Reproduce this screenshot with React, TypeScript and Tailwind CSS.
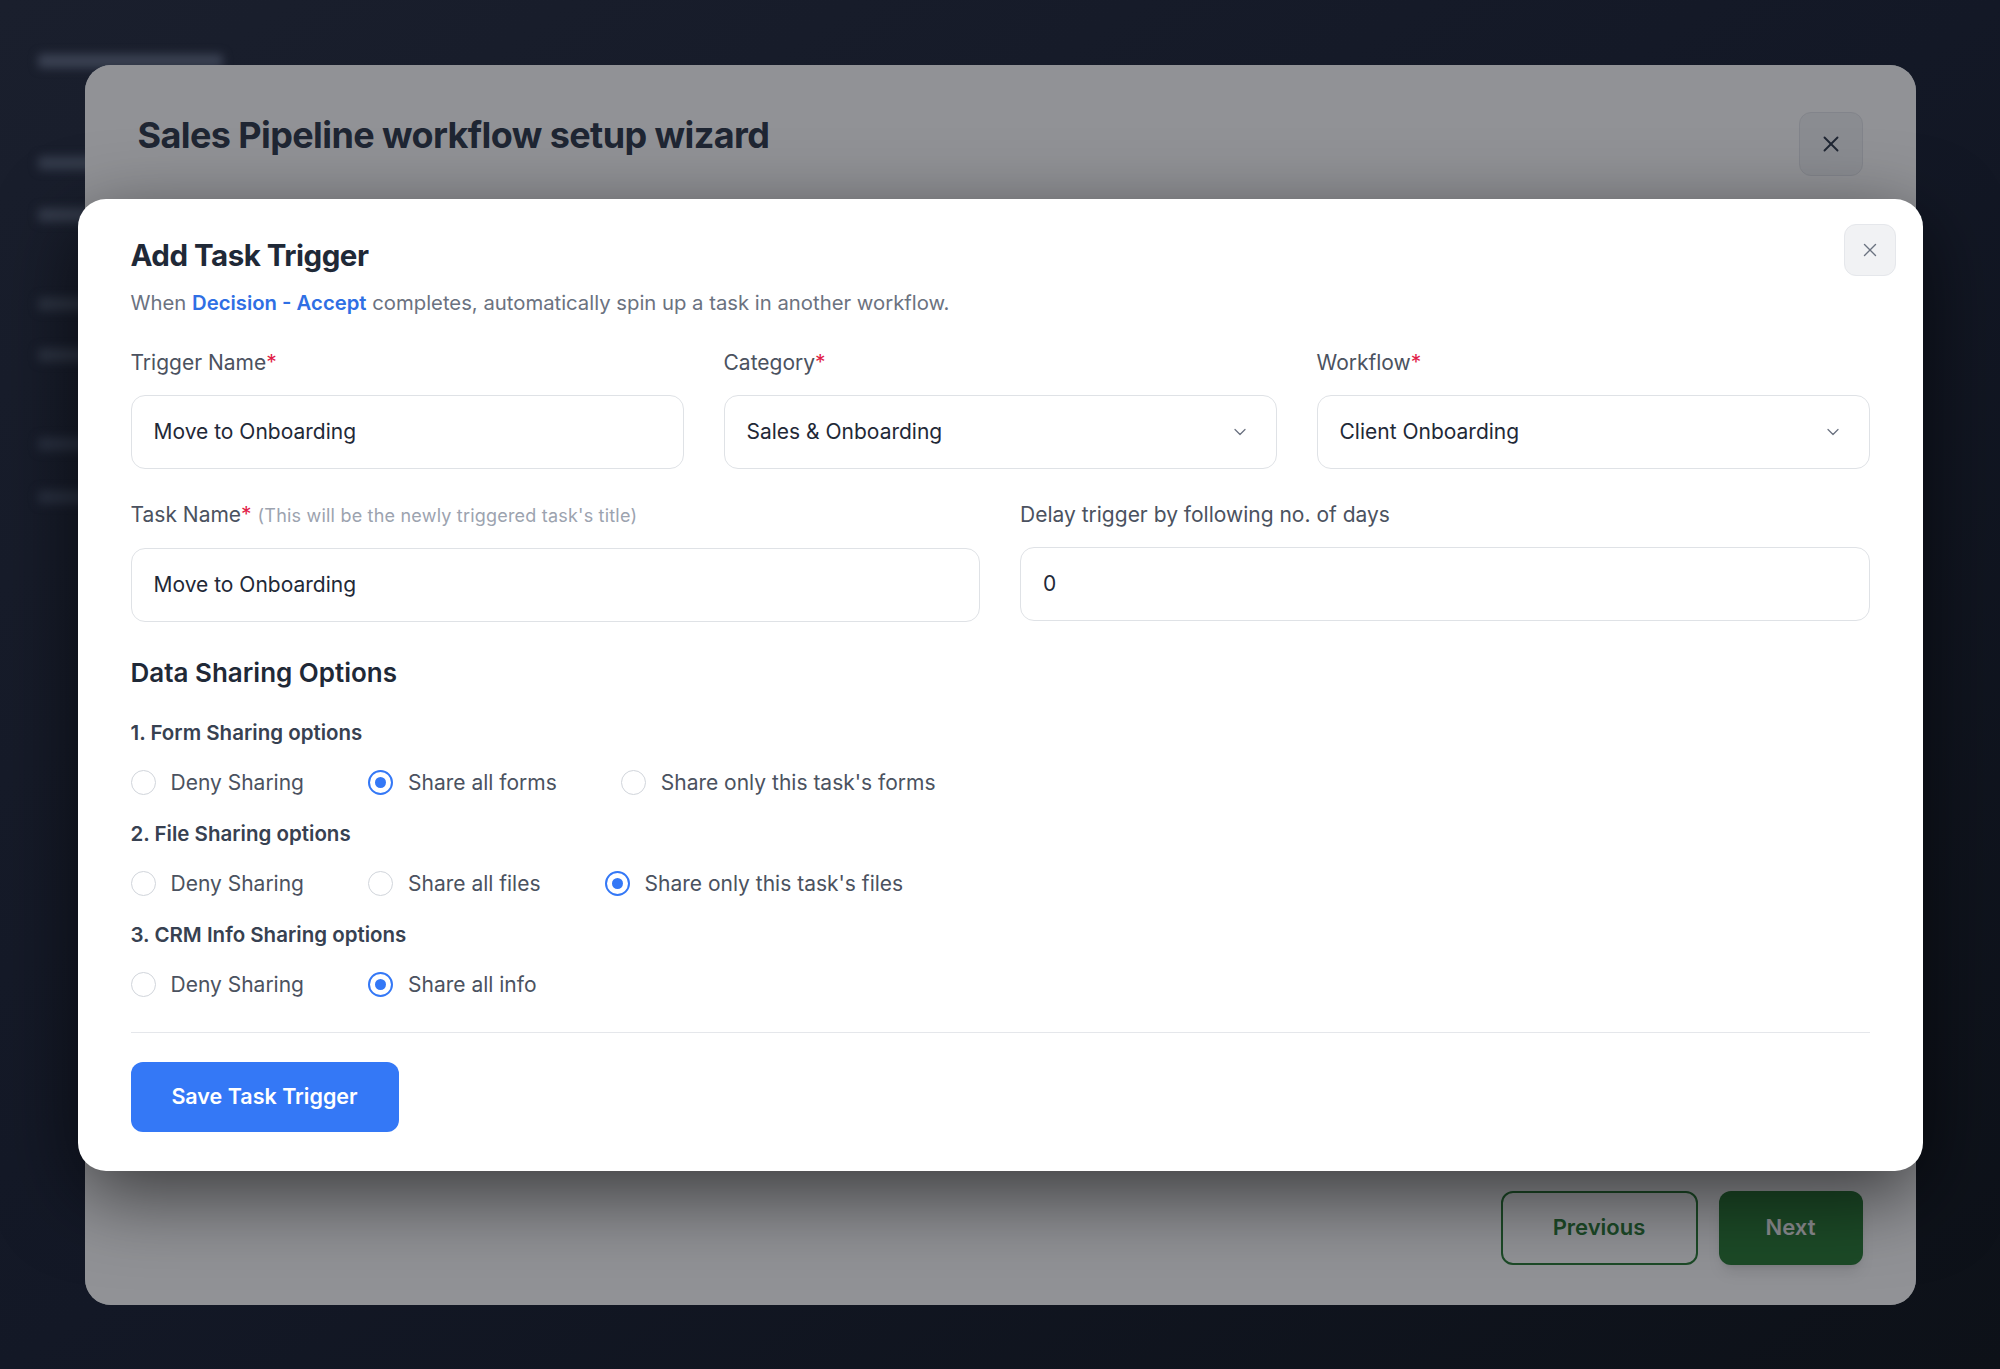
import { ChevronDown, X } from "lucide-react";

type Opt = { label: string; checked?: boolean };

const sharingGroups: { title: string; options: Opt[] }[] = [
  {
    title: "1. Form Sharing options",
    options: [{ label: "Deny Sharing" }, { label: "Share all forms", checked: true }, { label: "Share only this task's forms" }],
  },
  {
    title: "2. File Sharing options",
    options: [{ label: "Deny Sharing" }, { label: "Share all files" }, { label: "Share only this task's files", checked: true }],
  },
  {
    title: "3. CRM Info Sharing options",
    options: [{ label: "Deny Sharing" }, { label: "Share all info", checked: true }],
  },
];

const Radio = ({ checked }: { checked?: boolean }) =>
  checked ? (
    <span className="flex h-[25px] w-[25px] items-center justify-center rounded-full border-2 border-[#3478f6] bg-white">
      <span className="h-[11px] w-[11px] rounded-full bg-[#3478f6]" />
    </span>
  ) : (
    <span className="h-[25px] w-[25px] rounded-full border-[1.5px] border-[#d1d5db] bg-white" />
  );

const Label = ({ text, required = true, hint }: { text: string; required?: boolean; hint?: string }) => (
  <div className="text-[21px] leading-[28px] text-[#4b5260]">
    {text}
    {required && <span className="text-[#e11d48]">*</span>}
    {hint && <span className="ml-[6px] text-[18px] tracking-[0.2px] text-[#9ca3af]">{hint}</span>}
  </div>
);

const Field = ({ value, select }: { value: string; select?: boolean }) => (
  <div className="mt-[18px] flex h-[74px] items-center justify-between rounded-[14px] border-[1.5px] border-[#dfe2e6] bg-white pl-[22px] pr-[26px]">
    <span className="text-[21px] text-[#1f2937]">{value}</span>
    {select && <ChevronDown size={20} strokeWidth={1.5} className="text-[#6b7280]" />}
  </div>
);

const App = () => {
  return (
    <div className="relative h-[1369px] w-full overflow-hidden bg-gradient-to-br from-[#1a1f2d] via-[#131826] to-[#0d1118] font-['Inter',sans-serif]">
      {/* page behind, blurred */}
      <div className="absolute inset-0 flex flex-col items-start pl-[38px] pt-[54px] blur-[5px]">
        <div className="h-[14px] w-[185px] rounded bg-[#3a4152]" />
        <div className="mt-[88px] h-[14px] w-[90px] rounded bg-[#333a4a]" />
        <div className="mt-[38px] h-[14px] w-[90px] rounded bg-[#333a4a]" />
        <div className="mt-[75px] h-[14px] w-[90px] rounded bg-[#2c3342]" />
        <div className="mt-[37px] h-[14px] w-[90px] rounded bg-[#2c3342]" />
        <div className="mt-[75px] h-[14px] w-[90px] rounded bg-[#293040]" />
        <div className="mt-[39px] h-[14px] w-[90px] rounded bg-[#293040]" />
      </div>

      {/* wizard modal (dimmed) */}
      <div className="absolute inset-0 flex items-center justify-center">
        <div className="relative flex h-[1240px] w-[1831px] flex-col justify-between rounded-[26px] bg-white">
          <div className="flex items-start justify-between pl-[53px] pr-[53px] pt-[47px]">
            <h1 className="-mt-[4px] text-[36px] font-bold tracking-[-0.6px] text-[#374151]">
              Sales Pipeline workflow setup wizard
            </h1>
            <button className="flex h-[64px] w-[64px] items-center justify-center rounded-xl border border-[#e5e7eb] bg-[#f3f4f6] text-[#374151]">
              <X size={26} strokeWidth={1.75} />
            </button>
          </div>
          <div className="flex justify-end gap-[21px] pb-[40px] pr-[53px]">
            <button className="h-[74px] w-[197px] rounded-xl border-2 border-[#31803c] text-[22px] font-semibold text-[#31803c]">
              Previous
            </button>
            <button className="h-[74px] w-[144px] rounded-xl bg-[#31803c] text-[22px] font-semibold text-[#f4f4f4] shadow-lg">
              Next
            </button>
          </div>
          <div className="absolute inset-0 rounded-[26px] bg-[#00020c]/[0.43]" />
        </div>
      </div>

      {/* add task trigger dialog */}
      <div className="absolute inset-0 flex items-center justify-center">
        <div className="relative w-[1845px] rounded-[28px] bg-white px-[53px] pb-[39px] pt-[38px] shadow-[0_24px_80px_rgba(0,0,0,0.6)]">
          <button className="absolute right-[27px] top-[25px] flex h-[52px] w-[52px] items-center justify-center rounded-xl border border-[#e5e7eb] bg-[#f1f2f4] text-[#6b7280]">
            <X size={22} strokeWidth={1.5} />
          </button>

          <h2 className="text-[29.5px] font-bold leading-[36px] tracking-[-0.5px] text-[#1f2937]">Add Task Trigger</h2>
          <p className="mt-[16px] text-[20.3px] leading-[28px] text-[#6b7280]">
            When <span className="font-semibold text-[#2f6fe4]">Decision - Accept</span> completes, automatically spin up a
            task in another workflow.
          </p>

          <div className="mt-[32px] grid grid-cols-3 gap-x-[40px]">
            <div>
              <Label text="Trigger Name" />
              <Field value="Move to Onboarding" />
            </div>
            <div>
              <Label text="Category" />
              <Field value="Sales & Onboarding" select />
            </div>
            <div>
              <Label text="Workflow" />
              <Field value="Client Onboarding" select />
            </div>
          </div>

          <div className="mt-[32px] grid grid-cols-2 gap-x-[40px]">
            <div>
              <Label text="Task Name" hint="(This will be the newly triggered task's title)" />
              <Field value="Move to Onboarding" />
            </div>
            <div>
              <Label text="Delay trigger by following no. of days" required={false} />
              <Field value="0" />
            </div>
          </div>

          <h3 className="mt-[35px] text-[26px] font-semibold leading-[32px] text-[#1f2937]">Data Sharing Options</h3>

          <div className="mt-[30px] flex flex-col">
            {sharingGroups.map((group, gi) => (
              <div key={group.title} className={gi > 0 ? "mt-[23px]" : ""}>
                <div className="text-[20.5px] font-semibold leading-[28px] text-[#374151]">{group.title}</div>
                <div className="mt-[22px] flex items-center gap-x-[64px]">
                  {group.options.map((opt) => (
                    <label key={opt.label} className="flex items-center gap-[15px] text-[21px] leading-[28px] text-[#4b5260]">
                      <Radio checked={opt.checked} />
                      {opt.label}
                    </label>
                  ))}
                </div>
              </div>
            ))}
          </div>

          <div className="mt-[33px] h-px bg-[#e5e7eb]" />

          <button className="mt-[29px] h-[70px] w-[268px] rounded-xl bg-[#3478f6] text-[21.5px] font-semibold text-white">
            Save Task Trigger
          </button>
        </div>
      </div>
    </div>
  );
};

export default App;
